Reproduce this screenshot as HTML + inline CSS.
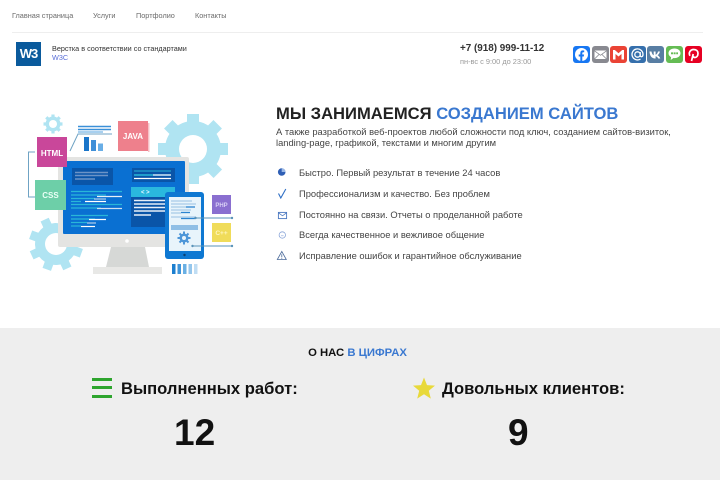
<!DOCTYPE html>
<html lang="ru"><head><meta charset="utf-8"><title>Услуги</title>
<style>
html,body{margin:0;padding:0;background:#fff}
body{width:720px;height:480px;overflow:hidden;position:relative;font-family:"Liberation Sans",sans-serif;color:#333}
.t{position:absolute;white-space:nowrap}
.nav{top:10px;font-size:7.3px;line-height:12px;color:#6b6b6b}
.li{left:299px;font-size:9.35px;line-height:14px;color:#444}
.ic{position:absolute;left:276px;width:12px;height:12px}
.s{position:absolute;top:46px;width:17px;height:17px;border-radius:3px}
.s svg{display:block;width:17px;height:17px}
</style></head><body>
<div class="t nav" style="left:12px">Главная страница</div>
<div class="t nav" style="left:93px">Услуги</div>
<div class="t nav" style="left:136px">Портфолио</div>
<div class="t nav" style="left:195px">Контакты</div>
<div style="position:absolute;left:12px;top:32px;width:691px;height:1px;background:#eee"></div>

<div style="position:absolute;left:16px;top:42px;width:25px;height:24px;background:#0a5a9c;color:#fff;font:bold 13px/24px 'Liberation Sans',sans-serif;text-align:center;letter-spacing:-1px">W3</div>
<div class="t" style="left:52px;top:43px;font-size:7.25px;line-height:11px;color:#333">Верстка в соответствии со стандартами</div>
<div class="t" style="left:52px;top:52px;font-size:7.25px;line-height:11px;color:#5a6fd8">W3C</div>

<div class="t" style="left:460px;top:42px;font-size:9.9px;line-height:14px;font-weight:bold;color:#333">+7 (918) 999-11-12</div>
<div class="t" style="left:460px;top:56px;font-size:7.4px;line-height:12px;color:#999">пн-вс с 9:00 до 23:00</div>

<div class="s" style="left:573px;background:#1877f2"><svg viewBox="0 0 17 17"><circle cx="8.500" cy="8.500" r="6.500" fill="#fff"/><path d="M7.300 15.500v-5H5.700V8.500h1.600V7c0-1.700 1-2.600 2.500-2.600l1.400.1v1.700h-.9c-.8 0-1 .4-1 1v1.300h1.800l-.3 2H9.300v5z" fill="#1877f2"/></svg></div>
<div class="s" style="left:592px;background:#888990"><svg viewBox="0 0 17 17"><rect x="2.500" y="4.500" width="12" height="8.500" fill="#fff"/><path d="M2.500 4.800l6 4.500 6-4.500M2.500 13l4.500-4.500M14.500 13L10 8.500" fill="none" stroke="#888990" stroke-width=".8"/></svg></div>
<div class="s" style="left:610px;background:#ea4335"><svg viewBox="0 0 17 17"><path d="M3 13.500V4h1.800l3.700 3.200L12.200 4H14v9.500h-2.500V8l-3 2.500-3-2.500v5.500z" fill="#fff"/></svg></div>
<div class="s" style="left:629px;background:#356fac"><svg viewBox="0 0 17 17"><circle cx="8.500" cy="8.500" r="2.700" fill="none" stroke="#fff" stroke-width="1.300"/><path d="M11.200 6v3.500c0 1.800 2.800 1.800 2.800-1A5.500 5.500 0 1 0 11.500 13" fill="none" stroke="#fff" stroke-width="1.300"/></svg></div>
<div class="s" style="left:647px;background:#587ea3"><svg viewBox="0 0 17 17"><path d="M2.500 5.500h2c.3 2 1.200 3.500 2.200 3.800V5.500h1.900v3.200c1-.2 2-1.500 2.400-3.200h1.900c-.3 1.800-1.400 3.100-2.300 3.700 1 .5 2.100 1.600 2.700 3.300h-2.100c-.5-1.300-1.500-2.200-2.600-2.300v2.300h-.6C5 12.500 2.700 10 2.500 5.500z" fill="#fff"/></svg></div>
<div class="s" style="left:666px;background:#65bc54"><svg viewBox="0 0 17 17"><path d="M8.500 2.500c3.500 0 6 2 6 4.800s-2.500 4.800-6 4.800l-1-.1-2.800 2 .4-2.800C3.500 10.300 2.500 9 2.500 7.300c0-2.800 2.500-4.800 6-4.800z" fill="#fff"/><path d="M5 7.300h7" stroke="#65bc54" stroke-width="1.800" stroke-dasharray="2 .6"/></svg></div>
<div class="s" style="left:685px;background:#e60023"><svg viewBox="0 0 17 17"><path d="M6.500 15l1.700-7M5 9.800C3.200 7 5.200 3.500 8.800 3.500c2.700 0 4.200 1.800 4.200 3.900 0 2.500-1.400 4.100-3.100 4.100-1 0-1.700-.6-1.800-1.500" fill="none" stroke="#fff" stroke-width="1.700"/></svg></div>

<svg style="position:absolute;left:0;top:0" width="260" height="290" viewBox="0 0 260 290">
<g fill="#b0e4f2">
<g><circle cx="193" cy="149" r="28"/><g stroke="#b0e4f2" stroke-width="12"><path d="M193 114v70M158 149h70M168.300 124.300l49.500 49.500M217.700 124.300l-49.500 49.500"/></g></g>
<circle cx="53" cy="124" r="7.500"/><g stroke="#b0e4f2" stroke-width="3.200"><path d="M53 114.500v19M43.500 124h19M46.300 117.300l13.400 13.400M59.700 117.300l-13.400 13.400"/></g>
<g transform="rotate(20 56 244)"><circle cx="56" cy="244" r="21"/><g stroke="#b0e4f2" stroke-width="9"><path d="M56 217v54M29 244h54M37 225l38 38M75 225l-38 38"/></g></g>
</g>
<circle cx="193" cy="149" r="14" fill="#fff"/><circle cx="53" cy="124" r="4" fill="#fff"/><circle cx="56" cy="244" r="11" fill="#fff"/>

<g fill="none" stroke="#6fa3c4" stroke-width="1">
<path d="M35 152H28.500V197H35"/>
<path d="M70 151L78 134H112"/>
</g>
<path d="M78 126.500h33M78 129.500h33" stroke="#3a90d8" stroke-width="1.500"/>
<path d="M78 132h25" stroke="#8cc0ea" stroke-width="1.500"/>
<rect x="84" y="137" width="5" height="14" fill="#1a75c9"/><rect x="91" y="140" width="5" height="11" fill="#3f8fd8"/><rect x="98" y="143.500" width="5" height="7.500" fill="#69aee6"/>

<rect x="118" y="121" width="30" height="30" fill="#ee808c"/><rect x="148" y="123" width="1.500" height="29" fill="#f7c0c6"/>
<text x="133" y="139" font-size="8" font-weight="bold" fill="#fff" text-anchor="middle" font-family="Liberation Sans">JAVA</text>

<path d="M93 274h69v-7H93z" fill="#e8e8e6"/>
<path d="M111 247h34l4 20h-43z" fill="#d6d8d6"/>
<rect x="58" y="157" width="131" height="90" rx="2" fill="#e4e4e2"/>
<rect x="63" y="161" width="122" height="73" rx="1" fill="#0a70d2"/>
<circle cx="127" cy="241" r="1.800" fill="#fff"/>

<rect x="72" y="168" width="41" height="17" fill="#0a55a8"/><path d="M75 172.500h33M75 175.500h33" stroke="#6b93c7" stroke-width="1.500"/><path d="M75 179h20" stroke="#6b93c7" stroke-width="1.500"/>
<rect x="132" y="168" width="43" height="14" fill="#0a55a8"/>
<path d="M134 171h37" stroke="#29b6d8" stroke-width="1"/><path d="M134 175h19" stroke="#29b6d8" stroke-width="1.500"/><path d="M153 175h18" stroke="#cfe8f5" stroke-width="1.500"/><path d="M134 178.500h37" stroke="#fff" stroke-width="1.200"/>
<rect x="131" y="187" width="44" height="10" fill="#2ab8de"/>
<rect x="131" y="197" width="44" height="30" fill="#0a55a8"/>
<text x="141" y="194" font-size="6" font-weight="bold" fill="#e8f8ff" font-family="Liberation Sans">&lt; &gt;</text>
<path d="M134 200.500h31M134 204h31M134 207.500h31M134 211h31" stroke="#e8f0f8" stroke-width="1.500"/><path d="M134 215h17" stroke="#e8f0f8" stroke-width="1.500"/>

<g stroke-width="1.200">
<path d="M71 191.500h51" stroke="#29b6d8"/>
<path d="M71 195h35" stroke="#29b6d8"/><path d="M97 196.500h25" stroke="#e8f0f8"/>
<path d="M71 198.500h24" stroke="#29b6d8"/><path d="M94 199h12" stroke="#b5cfe8"/>
<path d="M71 201.500h10" stroke="#29b6d8"/><path d="M85 201.500h21" stroke="#fff"/>
<path d="M71 204.500h51" stroke="#29b6d8"/>
<path d="M71 208h30" stroke="#29b6d8"/><path d="M97 208.500h25" stroke="#cfe0f0"/>
<path d="M71 215.500h37" stroke="#29b6d8"/>
<path d="M71 219h24" stroke="#29b6d8"/><path d="M89 219.500h17" stroke="#fff"/>
<path d="M71 222.500h16" stroke="#29b6d8"/><path d="M87 223h9" stroke="#b5cfe8"/>
<path d="M71 226h10" stroke="#29b6d8"/><path d="M81 226.500h14" stroke="#fff"/>
</g>

<rect x="37" y="137" width="30" height="30" fill="#c9479a"/>
<text x="52" y="156" font-size="8" font-weight="bold" fill="#fff" text-anchor="middle" font-family="Liberation Sans">HTML</text>
<rect x="35" y="180" width="31" height="30" fill="#6dcfa8"/>
<text x="50.500" y="198" font-size="8" font-weight="bold" fill="#eafff6" text-anchor="middle" font-family="Liberation Sans">CSS</text>

<rect x="165" y="192" width="39" height="67" rx="3" fill="#0e78d2"/>
<rect x="169" y="197" width="32" height="54" fill="#e8f4fb"/>
<circle cx="184.500" cy="255" r="1.200" fill="#0a3f70"/>
<g stroke-width="1.300">
<path d="M171 201h21" stroke="#a9cbe8"/><path d="M171 204h25" stroke="#a9cbe8"/><path d="M171 207h15" stroke="#a9cbe8"/><path d="M186 207h9" stroke="#2c84d0"/>
<path d="M171 210h20" stroke="#a9cbe8"/><path d="M181 212.500h9" stroke="#2c84d0"/><path d="M171 213h10" stroke="#a9cbe8"/>
<path d="M171 217h25" stroke="#a9cbe8"/><path d="M181 218.500h14" stroke="#2c84d0"/>
</g>
<rect x="171" y="225" width="27" height="5" fill="#8fbfe6"/>
<g fill="#4d96d8"><circle cx="184" cy="238" r="4.500"/><path d="M184 231.500v13M177.500 238h13M179.500 233.500l9 9M188.500 233.500l-9 9" stroke="#4d96d8" stroke-width="2"/></g>
<circle cx="184" cy="238" r="2" fill="#e8f4fb"/>

<rect x="212" y="195" width="19" height="19" fill="#8a6fd0"/>
<text x="221.500" y="207" font-size="6" font-weight="bold" fill="#d8d0f5" text-anchor="middle" font-family="Liberation Sans">PHP</text>
<rect x="212" y="223" width="19" height="19" fill="#f0dc5a"/>
<text x="221.500" y="235" font-size="6.500" font-weight="bold" fill="#fff6c0" text-anchor="middle" font-family="Liberation Sans">C++</text>
<path d="M195 218h37M192 246h40" stroke="#5a93b8" stroke-width="1"/>
<g fill="#5a93b8"><circle cx="195.500" cy="218" r="1.200"/><circle cx="232" cy="218" r="1.200"/><circle cx="192.500" cy="246" r="1.200"/><circle cx="232" cy="246" r="1.200"/></g>

<rect x="172" y="264" width="3.500" height="10" fill="#1c7fcf"/><rect x="177.500" y="264" width="3.500" height="10" fill="#3f95da"/><rect x="183" y="264" width="3.500" height="10" fill="#6ab0e4"/><rect x="188.500" y="264" width="3.500" height="10" fill="#94c6ec"/><rect x="194" y="264" width="3.500" height="10" fill="#c0ddf3"/>
</svg>

<div class="t" style="left:276px;top:104px;font-size:16.6px;line-height:20px;font-weight:bold;color:#222">МЫ ЗАНИМАЕМСЯ <span style="color:#3a78d0">СОЗДАНИЕМ САЙТОВ</span></div>
<div class="t" style="left:276px;top:127px;font-size:9.35px;line-height:11px;color:#444">А также разработкой веб-проектов любой сложности под ключ, созданием сайтов-визиток,<br>landing-page, графикой, текстами и многим другим</div>

<svg class="ic" style="top:166px" viewBox="0 0 12 12"><circle cx="5.700" cy="6" r="3.800" fill="#2f5fb5"/><path d="M5.700 2.200A3.800 3.800 0 0 1 9.500 6H5.700z" fill="#9ab8e6"/></svg>
<svg class="ic" style="top:187px" viewBox="0 0 12 12"><path d="M2.500 6.500L4.800 11 9.800 2" fill="none" stroke="#2f6fc5" stroke-width="1.100"/></svg>
<svg class="ic" style="top:209px" viewBox="0 0 12 12"><rect x="2.400" y="3.400" width="8.200" height="6.200" fill="none" stroke="#4a78c0" stroke-width=".9"/><path d="M2.400 3.800L6.500 6.800l4.100-3" fill="none" stroke="#4a78c0" stroke-width=".8"/></svg>
<svg class="ic" style="top:229px" viewBox="0 0 12 12"><circle cx="6.300" cy="6" r="3.200" fill="none" stroke="#8aa5d8" stroke-width=".8"/><path d="M5 6.800h2.600" stroke="#8aa5d8" stroke-width=".6"/></svg>
<svg class="ic" style="top:250px" viewBox="0 0 12 12"><path d="M5.800 1.500L1.300 9.500h9z" fill="none" stroke="#4a6a9a" stroke-width=".8"/><path d="M5.800 4.300v3M5.800 7.900v.8" stroke="#4a6a9a" stroke-width=".8"/></svg>

<div class="t li" style="top:166px">Быстро. Первый результат в течение 24 часов</div>
<div class="t li" style="top:187px">Профессионализм и качество. Без проблем</div>
<div class="t li" style="top:208px">Постоянно на связи. Отчеты о проделанной работе</div>
<div class="t li" style="top:228px">Всегда качественное и вежливое общение</div>
<div class="t li" style="top:249px">Исправление ошибок и гарантийное обслуживание</div>

<div style="position:absolute;left:0;top:328px;width:720px;height:152px;background:#eee"></div>
<div class="t" style="left:0;width:715px;text-align:center;top:346px;font-size:11.3px;line-height:14px;font-weight:bold;color:#111">О НАС <span style="color:#3a78d0">В ЦИФРАХ</span></div>

<div style="position:absolute;left:92px;top:378px;width:20px;height:3px;background:#2ea52e"></div>
<div style="position:absolute;left:92px;top:386px;width:20px;height:3px;background:#2ea52e"></div>
<div style="position:absolute;left:92px;top:395px;width:20px;height:3px;background:#2ea52e"></div>
<div class="t" style="left:121px;top:379px;font-size:16.6px;line-height:20px;font-weight:bold;color:#111">Выполненных работ:</div>
<div class="t" style="left:174px;top:411px;font-size:37px;line-height:44px;font-weight:bold;color:#111">12</div>

<svg style="position:absolute;left:412px;top:376px" width="24" height="24" viewBox="0 0 24 24"><path d="M12 1.500l3 7.600 8 .5-6.200 5.100 2 7.900L12 18.300 5.200 22.600l2-7.900L1 9.600l8-.5z" fill="#e8d93a"/></svg>
<div class="t" style="left:442px;top:379px;font-size:16.6px;line-height:20px;font-weight:bold;color:#111">Довольных клиентов:</div>
<div class="t" style="left:508px;top:411px;font-size:37px;line-height:44px;font-weight:bold;color:#111">9</div>
</body></html>
